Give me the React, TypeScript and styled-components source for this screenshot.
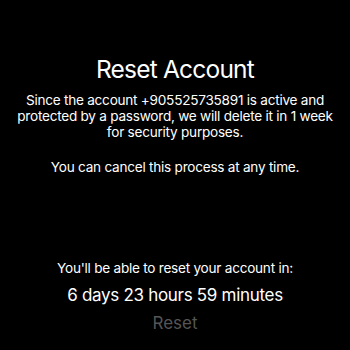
import React from "react";
import styled, { createGlobalStyle } from "styled-components";

const Global = createGlobalStyle`
  html, body { margin: 0; padding: 0; background: #000; }
  body { font-family: Inter, "Noto Sans", sans-serif; -webkit-font-smoothing: antialiased; }
`;

const Screen = styled.div`
  width: 350px;
  height: 350px;
  background: #000;
  color: #fff;
  display: flex;
  flex-direction: column;
  align-items: center;
  box-sizing: border-box;
  padding-top: 54px;
`;

const Title = styled.h1`
  margin: 0;
  font-size: 24.5px;
  font-weight: 400;
  line-height: 30px;
  letter-spacing: -0.8px;
`;

const Body = styled.p<{ $top: number }>`
  margin: ${(p) => p.$top}px 0 0;
  width: 326px;
  text-align: center;
  font-size: 13.6px;
  line-height: 16px;
  letter-spacing: -0.25px;
`;

const Spacer = styled.div`
  flex: 1;
`;

const Footer = styled.div`
  display: flex;
  flex-direction: column;
  align-items: center;
  padding-bottom: 16px;
`;

const Note = styled.div`
  margin-bottom: -2px;
  font-size: 13.6px;
  line-height: 18px;
  letter-spacing: -0.25px;
`;

const Countdown = styled.div`
  margin-top: 9px;
  font-size: 17px;
  line-height: 22px;
  letter-spacing: -0.3px;
  margin-bottom: 2px;
`;

const ResetButton = styled.button`
  margin-top: 4px;
  background: none;
  border: none;
  padding: 0;
  font-family: inherit;
  font-size: 17px;
  line-height: 22px;
  color: #555;
`;

export default function App() {
  return (
    <Screen>
      <Global />
      <Title>Reset Account</Title>
      <Body $top={8}>
        Since the account +905525735891 is active and protected by a password, we will delete it in 1 week for security purposes.
      </Body>
      <Body $top={19}>You can cancel this process at any time.</Body>
      <Spacer />
      <Footer>
        <Note>You'll be able to reset your account in:</Note>
        <Countdown>6 days 23 hours 59 minutes</Countdown>
        <ResetButton>Reset</ResetButton>
      </Footer>
    </Screen>
  );
}
